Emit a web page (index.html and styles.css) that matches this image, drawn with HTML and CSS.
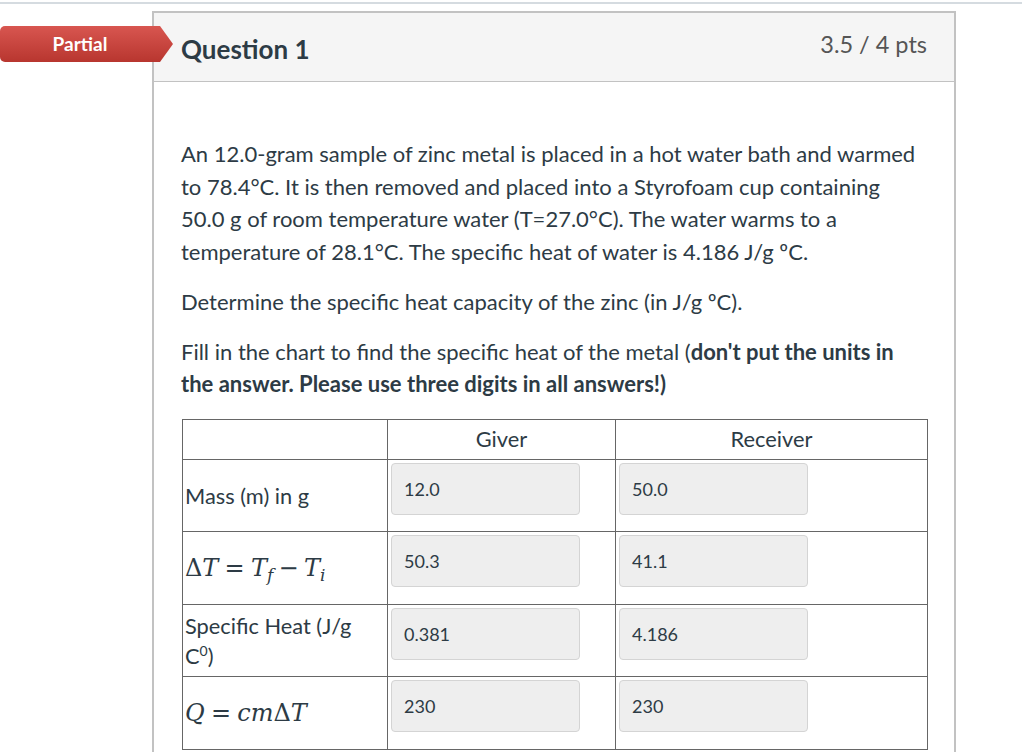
FILE: index.html
```html
<!DOCTYPE html>
<html>
<head>
<meta charset="utf-8">
<link rel="stylesheet" href="styles.css">
</head>
<body>
<div class="topline"></div>
<div class="page">
  <div class="badge">Partial</div>
  <div class="question">
    <div class="q-header">
      <span class="q-title">Question 1</span>
      <span class="q-points">3.5 / 4 pts</span>
    </div>
    <div class="q-body">
      <p>An 12.0-gram sample of zinc metal is placed in a hot water bath and warmed to 78.4°C. It is then removed and placed into a Styrofoam cup containing 50.0 g of room temperature water (T=27.0°C). The water warms to a temperature of 28.1°C. The specific heat of water is 4.186 J/g ºC.</p>
      <p>Determine the specific heat capacity of the zinc (in J/g ºC).</p>
      <p>Fill in the chart to find the specific heat of the metal (<strong>don't put the units in the answer. Please use three digits in all answers!)</strong></p>
      <table class="chart">
        <colgroup><col class="c1"><col class="c2"><col class="c3"></colgroup>
        <tr class="head"><th></th><th>Giver</th><th>Receiver</th></tr>
        <tr><td class="lbl">Mass (m) in g</td><td><div class="ans">12.0</div></td><td><div class="ans">50.0</div></td></tr>
        <tr><td class="lbl"><span class="math"><span class="up">Δ</span><i>T</i><span class="up rel">=</span><i>T</i><sub><i>f</i></sub><span class="up bin">−</span><i>T</i><sub><i>i</i></sub></span></td><td><div class="ans">50.3</div></td><td><div class="ans">41.1</div></td></tr>
        <tr><td class="lbl">Specific Heat (J/g C<sup>0</sup>)</td><td><div class="ans">0.381</div></td><td><div class="ans">4.186</div></td></tr>
        <tr><td class="lbl"><span class="math"><i>Q</i><span class="up rel">=</span><i>cm</i><span class="up">Δ</span><i>T</i></span></td><td><div class="ans">230</div></td><td><div class="ans">230</div></td></tr>
      </table>
    </div>
  </div>
</div>
</body>
</html>
```
FILE: styles.css
```css
html, body { margin: 0; padding: 0; background: #fff; }
body { font-family: Lato, "Open Sans", sans-serif; color: #2d3b45; width: 1024px; height: 752px; overflow: hidden; }
.topline { height: 2px; margin-top: 2px; background: #d5dbe0; width: 1022px; }
.page { position: relative; padding-left: 152px; padding-top: 7px; }
.badge {
  position: absolute; left: 0; top: 22px; width: 173px; height: 36px;
  box-sizing: border-box; padding-right: 13px;
  border-radius: 5px 0 0 5px;
  background: linear-gradient(#d85650, #b8362f);
  clip-path: polygon(0 0, 160px 0, 100% 50%, 160px 100%, 0 100%);
  color: #fff; font-weight: 700; font-size: 19px; line-height: 36px; text-align: center;
  z-index: 2;
}
.question { width: 804px; box-sizing: border-box; border: 2px solid #c2c2c2; border-bottom: none; min-height: 760px; }
.q-header { height: 68px; background: #f5f5f5; border-bottom: 1px solid #c2c2c2; display: flex; align-items: center; justify-content: space-between; padding: 0 27px 0 27px; }
.q-title { font-weight: 700; font-size: 26px; color: #2d3b45; padding-top: 4px; }
.q-points { font-size: 23.5px; color: #555; padding-bottom: 6px; }
.q-body { padding: 56px 27px 0 27px; font-size: 22px; line-height: 32.7px; }
.q-body p { margin: 0 0 17px 0; }
.chart { border-collapse: collapse; width: 746px; margin-left: 1px; margin-top: 18px; line-height: 30px; }
.chart col.c1 { width: 205px; }
.chart col.c2 { width: 228px; }
.chart th, .chart td { border: 1px solid #666; padding: 0; }
.chart th { font-weight: 400; height: 39px; text-align: center; font-size: 21.8px; }
.chart td { height: 71.5px; vertical-align: top; }
.chart td.lbl { vertical-align: middle; padding: 0 14px 0 2px; font-size: 21.8px; }
.ans { margin: 3px 0 0 3px; width: 189px; height: 52px; box-sizing: border-box; background: #eeeeee; border: 1px solid #d4d4d4; border-radius: 4px; font-size: 18px; line-height: 50px; padding-left: 12px; color: #2d3b45; }
.math { font-family: "DejaVu Serif", "Liberation Serif", serif; font-size: 24px; white-space: nowrap; }
.math .up { font-style: normal; }
.math .rel { margin: 0 0.26em; }
.math .bin { margin: 0 0.22em; }
.math sub { font-size: 17px; vertical-align: -5px; line-height: 0; }
sup { font-size: 14px; vertical-align: 8px; line-height: 0; }
```
